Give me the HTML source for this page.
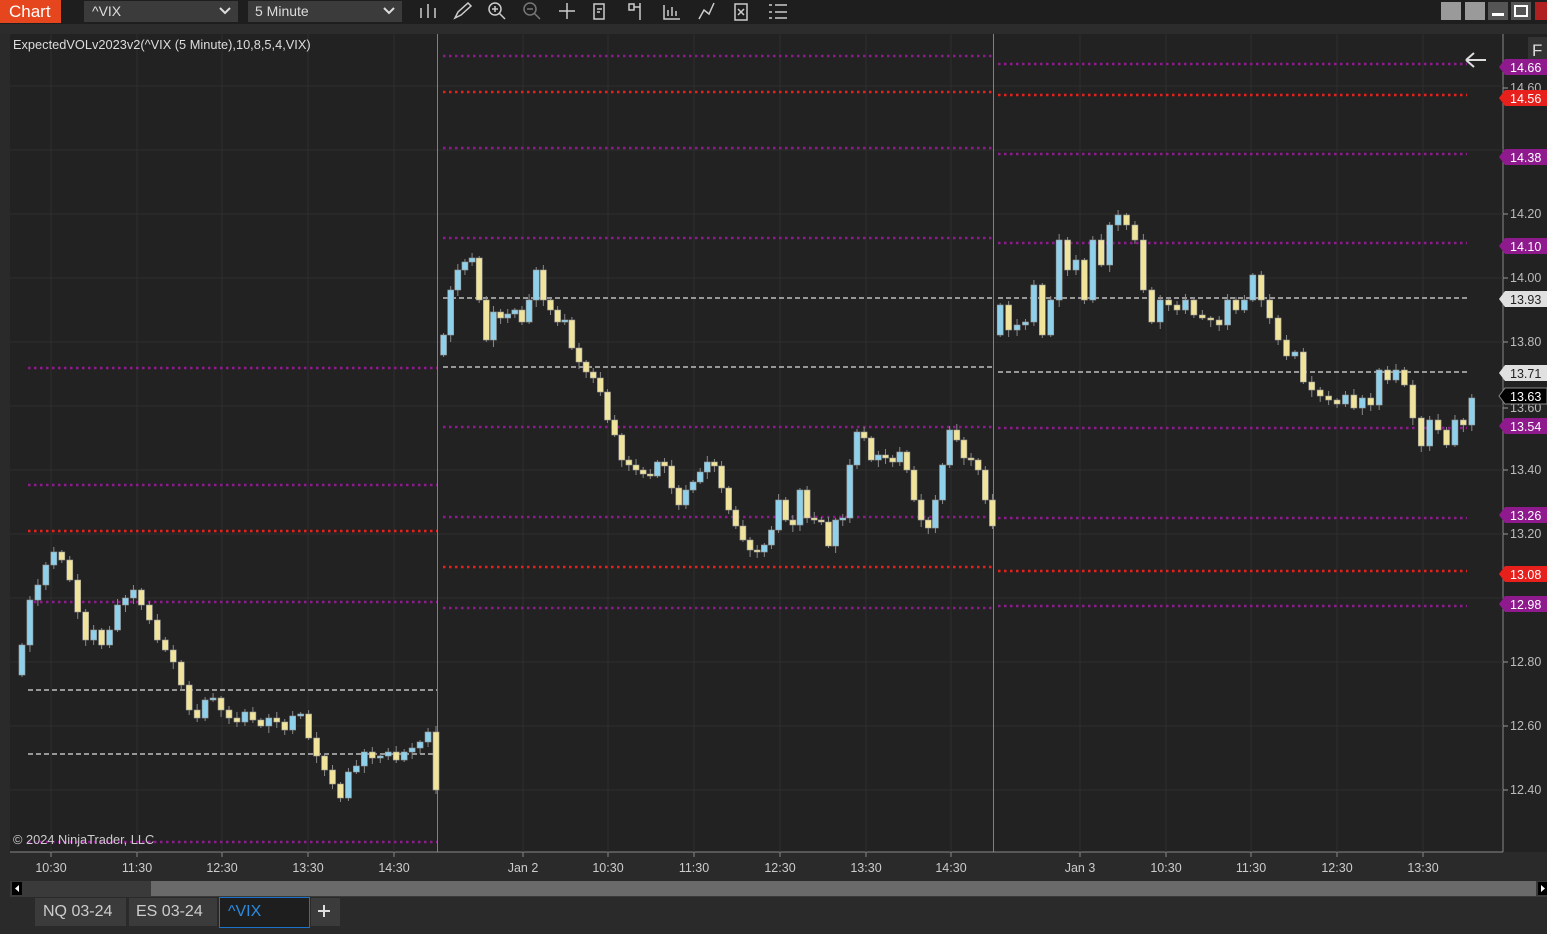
<!DOCTYPE html>
<html><head><meta charset="utf-8"><style>
body{margin:0;width:1547px;height:934px;background:#2a2a2a;overflow:hidden;font-family:"Liberation Sans",sans-serif}
</style></head><body>
<svg id="s" width="1547" height="934" xmlns="http://www.w3.org/2000/svg" style="position:absolute;left:0;top:0" font-family="Liberation Sans, sans-serif">
<rect width="1547" height="934" fill="#2a2a2a"/>
<rect x="0" y="0" width="1547" height="24" fill="#1e1e1e"/>
<rect x="0" y="0" width="61" height="23" fill="#e5461d"/>
<text x="9" y="17" fill="#fff" font-size="17">Chart</text>
<rect x="84" y="1" width="154" height="21" fill="#3b3b3b"/>
<text x="92" y="16" fill="#ddd" font-size="14">^VIX</text>
<path d="M220 8l5 5 5-5" stroke="#ddd" stroke-width="2" fill="none"/>
<rect x="248" y="1" width="154" height="21" fill="#3b3b3b"/>
<text x="255" y="16" fill="#ddd" font-size="14">5 Minute</text>
<path d="M384 8l5 5 5-5" stroke="#ddd" stroke-width="2" fill="none"/>
<g stroke="#ccc" stroke-width="1.5" fill="none">
<path d="M421 8v10M428 4v14M435 8v10"/>
<path d="M455 18l3-6 10-9 3 3-10 9z"/>
<circle cx="495" cy="9" r="6"/><path d="M499 13l6 6M492 9h6M495 6v6"/>
<circle cx="530" cy="9" r="6" stroke="#777"/><path d="M534 13l6 6M527 9h6" stroke="#777"/>
<path d="M567 3v16M559 11h16"/>
<path d="M594 4h10v15h-10zM597 9h5M597 12h3"/>
<path d="M629 4h5v6h-5zM640 3v17M634 7h6"/>
<path d="M664 5v14h16M668 16v-6M672 16v-9M676 16v-5"/>
<path d="M699 19l5-9 5 4 5-11"/>
<path d="M735 4h12v16h-12zM738 9l6 6M744 9l-6 6"/>
<path d="M769 5h3M775 5h12M769 12h3M775 12h12M769 18h3M775 18h12"/>
</g>
<rect x="1441" y="2" width="20" height="18" fill="#9a9a9a"/>
<rect x="1465" y="2" width="20" height="18" fill="#9a9a9a"/>
<rect x="1488" y="2" width="20" height="18" fill="#555"/><rect x="1492" y="13" width="12" height="3" fill="#fff"/>
<rect x="1511" y="2" width="20" height="18" fill="#555"/><rect x="1515" y="6" width="12" height="10" fill="none" stroke="#fff" stroke-width="2"/>
<rect x="1535" y="2" width="12" height="18" fill="#b02020"/>
<rect x="0" y="24" width="1547" height="10" fill="#2c2c2c"/>
<rect x="10" y="34" width="1493" height="818" fill="#222"/>
<rect x="1503" y="34" width="44" height="818" fill="#222"/>
<line x1="1503" y1="34" x2="1503" y2="852" stroke="#888"/>
<line x1="10" y1="852" x2="1503" y2="852" stroke="#888"/>
<g id="grid" stroke="#2e2e2e" stroke-width="1"></g>
<line x1="437.5" y1="34" x2="437.5" y2="852" stroke="#999" stroke-width="0.8"/>
<line x1="993.5" y1="34" x2="993.5" y2="852" stroke="#999" stroke-width="0.8"/>
<g id="lines"></g>
<g id="candles"></g>
<text x="13" y="49" fill="#ddd" font-size="12.8">ExpectedVOLv2023v2(^VIX (5 Minute),10,8,5,4,VIX)</text>
<text x="13" y="844" fill="#ccc" font-size="12.8">© 2024 NinjaTrader, LLC</text>
<path d="M1466 60h20M1466 60l8-7M1466 60l8 7" stroke="#ddd" stroke-width="2" fill="none"/>
<rect x="1528" y="37" width="19" height="24" fill="#333"/>
<text x="1532" y="56" fill="#ddd" font-size="17">F</text>
<g id="axis" font-size="12.5" fill="#bbb"></g>
<g id="tl" font-size="12.5" fill="#ccc"></g>
<rect x="10" y="881" width="1537" height="16" fill="#3a3a3a"/>
<rect x="12" y="882" width="10" height="13" fill="#000"/><path d="M19 885v7l-4-3.5z" fill="#fff"/>
<rect x="151" y="881" width="1385" height="15" fill="#6a6a6a"/>
<rect x="1538" y="882" width="9" height="13" fill="#000"/><path d="M1541 885v7l4-3.5z" fill="#fff"/>
<rect x="35" y="898" width="91" height="28" fill="#3b3b3b"/>
<text x="43" y="916" fill="#ccc" font-size="16">NQ 03-24</text>
<rect x="129" y="898" width="88" height="28" fill="#3b3b3b"/>
<text x="136" y="916" fill="#ccc" font-size="16">ES 03-24</text>
<rect x="219.5" y="897.5" width="90" height="30" fill="#1e1e1e" stroke="#1a73c8"/>
<text x="228" y="916" fill="#2a8be0" font-size="16">^VIX</text>
<rect x="311" y="898" width="29" height="28" fill="#3b3b3b"/>
<path d="M318 911h12M324 905v12" stroke="#ddd" stroke-width="2"/>
</svg>
<script>
const NS="http://www.w3.org/2000/svg";
function el(p,t,a,txt){const e=document.createElementNS(NS,t);for(const k in a)e.setAttribute(k,a[k]);if(txt)e.textContent=txt;document.getElementById(p).appendChild(e);return e;}
const Y=p=>214+(14.20-p)*320;
[14.6,14.4,14.2,14.0,13.8,13.6,13.4,13.2,13.0,12.8,12.6,12.4].forEach(p=>el('grid','line',{x1:10,x2:1503,y1:Y(p),y2:Y(p)}));
const tx=[51,137,222,308,394,523,608,694,780,866,951,1080,1166,1251,1337,1423];
const tl=["10:30","11:30","12:30","13:30","14:30","Jan 2","10:30","11:30","12:30","13:30","14:30","Jan 3","10:30","11:30","12:30","13:30"];
tx.forEach((x,i)=>{el('grid','line',{x1:x,x2:x,y1:34,y2:852});el('grid','line',{x1:x,x2:x,y1:852,y2:857,stroke:'#888'});el('tl','text',{x:x,y:872,'text-anchor':'middle'},tl[i]);});
const P='#8e1a8e',R='#e8201c',W='#ddd';
function L(x1,x2,y,c){if(c==W)el('lines','line',{x1,x2,y1:y,y2:y,stroke:W,'stroke-width':1.2,'stroke-dasharray':'5 3'});else el('lines','line',{x1,x2,y1:y,y2:y,stroke:c,'stroke-width':2.5,'stroke-dasharray':'2.5 3.5'});}
[[368,P],[485,P],[602,P],[842,P],[531,R],[690,W],[754,W]].forEach(a=>L(28,437,a[0],a[1]));
[[56,P],[148,P],[238,P],[427,P],[517,P],[608,P],[92,R],[567,R],[298,W],[367,W]].forEach(a=>L(443,993,a[0],a[1]));
[[64,P],[154,P],[243,P],[428,P],[518,P],[606,P],[95,R],[571,R],[298,W],[372,W]].forEach(a=>L(998,1467,a[0],a[1]));
[[14.20,214],[14.00,278],[13.80,342],[13.40,470],[13.20,534],[12.80,662],[12.60,726],[12.40,790],[14.60,88],[13.60,408]].forEach(a=>{el('axis','line',{x1:1503,x2:1508,y1:a[1],y2:a[1],stroke:'#999'});el('axis','text',{x:1510,y:a[1]+4},a[0].toFixed(2));});
[["14.66",67,P,'#fff'],["14.56",98,R,'#fff'],["14.38",157,P,'#fff'],["14.10",246,P,'#fff'],["13.93",299,'#e0e0e0','#222'],["13.71",373,'#e0e0e0','#222'],["13.63",396,'#000','#fff'],["13.54",426,P,'#fff'],["13.26",515,P,'#fff'],["13.08",574,R,'#fff'],["12.98",604,P,'#fff']].forEach(a=>{const y=a[1];el('axis','path',{d:`M1499 ${y}l6-8h42v16h-42z`,fill:a[2],stroke:a[2]=='#000'?'#888':'none'});el('axis','text',{x:1510,y:y+5,fill:a[3]},a[0]);});
function C(x0,x1,o,cl){const n=cl.length,d=(x1-x0)/n;let op=o;cl.forEach((c,i)=>{const x=x0+i*d+d/2;const up=c<op;const t=Math.min(op,c),b=Math.max(op,c);const w1=(i*7%5)+2,w2=(i*11%6)+2;
el('candles','line',{x1:x,x2:x,y1:t-w1,y2:b+w2,stroke:'#888','stroke-width':1});
el('candles','rect',{x:x-3,y:t,width:6,height:Math.max(b-t,2),fill:up?'#8fd0ea':'#f0e49c',stroke:'#999','stroke-width':0.6});op=c;});}
C(18,440,675,[645,600,585,565,552,560,580,612,640,630,645,630,605,598,590,605,620,640,650,662,685,710,718,700,698,710,718,722,712,720,726,718,722,730,716,714,738,756,770,784,798,772,766,752,758,756,752,760,752,748,742,732,790]);
C(440,996,355,[335,290,270,262,258,300,340,312,318,314,310,322,300,270,300,310,322,320,348,362,372,378,392,420,435,460,465,470,474,476,462,466,488,505,490,482,472,462,466,488,510,526,540,550,552,545,530,500,520,525,490,518,520,522,546,520,518,465,432,438,460,455,458,462,452,470,500,520,528,500,465,430,440,458,460,470,500,526]);
C(996,1476,335,[305,330,325,322,285,335,300,240,270,260,300,240,265,225,215,225,240,290,322,300,305,310,300,315,318,320,325,300,310,300,275,300,318,340,356,352,382,390,396,400,404,395,408,398,405,370,380,370,385,418,446,420,430,445,420,425,398]);
</script>
</body></html>
